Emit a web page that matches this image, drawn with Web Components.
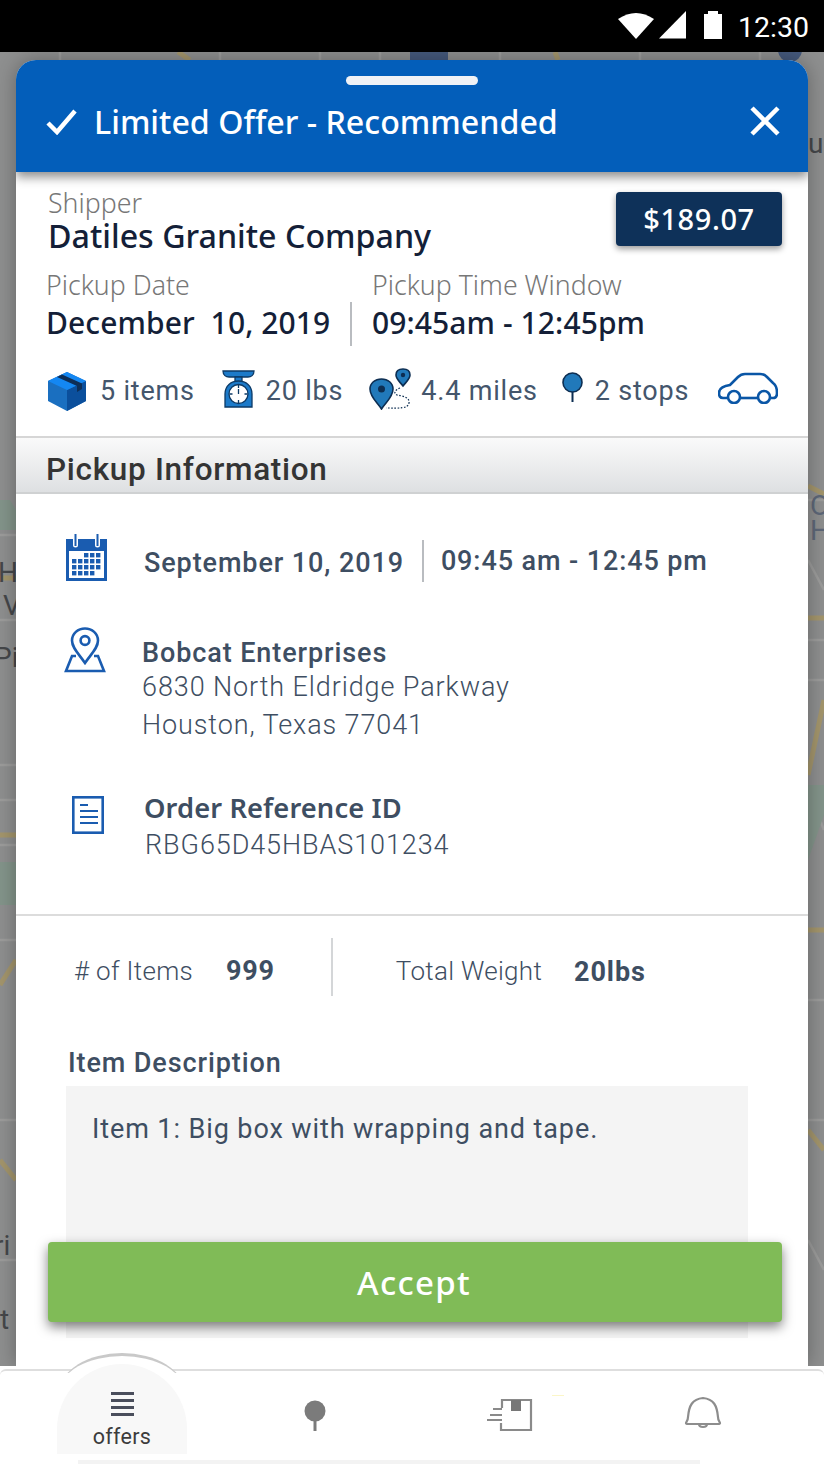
<!DOCTYPE html>
<html>
<head>
<meta charset="utf-8">
<title>Limited Offer</title>
<style>
  html, body { margin: 0; padding: 0; }
  body { width: 824px; height: 1464px; overflow: hidden; background: #fff; font-family: Roboto, "Liberation Sans", sans-serif; position: relative; }
</style>
</head>
<body>
<map-backdrop></map-backdrop>
<status-bar></status-bar>
<offer-sheet>
  <sheet-header>Limited Offer - Recommended</sheet-header>
  <shipper-summary></shipper-summary>
  <section-head>Pickup Information</section-head>
  <pickup-info></pickup-info>
  <item-details></item-details>
</offer-sheet>
<accept-button>Accept</accept-button>
<bottom-nav></bottom-nav>

<script>
// map behind the sheet, only the edges show
class MapBackdrop extends HTMLElement {
    constructor() {
        super();
        this.attachShadow({ mode: 'open' });
        this.shadowRoot.innerHTML = `
            <style>
                :host { position: absolute; left: 0; top: 52px; width: 824px; height: 1314px; overflow: hidden; background: #8e8f8f; display: block; }
                svg { position: absolute; left: 0; top: 0; }
                span { position: absolute; font: 28px/24px Roboto, sans-serif; color: #45474a; }
            </style>
            <svg width="824" height="1314" viewBox="0 52 824 1314" fill="none">
                <g stroke="#9c9c9b" stroke-width="2.500">
                    <path d="M0 535H16M0 620H16M0 765H16M0 800H16M0 845H16M0 940H16M0 1120H16M0 1260H16"/>
                    <path d="M808 500H824M808 560L824 590M808 640H824M808 680H824M808 790L824 830M808 1000H824M808 1120H824M808 1240L824 1270"/>
                    <path d="M60 52V60M220 52V60M320 52V60M380 52V60M500 52V60M640 52V60M760 52V60"/>
                </g>
                <g stroke="#a3956c" stroke-width="5">
                    <path d="M0 578H16M0 835H16M0 985L16 960M0 1160L16 1180"/>
                    <path d="M808 618H824M808 775L824 700M808 930H824M808 1130L824 1150M808 486L824 494"/>
                    <path d="M178 52L190 60M555 52L558 60"/>
                </g>
                <path d="M0 500H10L16 510V530H0ZM0 862H16V905H0Z" fill="#83948a"/>
                <path d="M808 785L824 785V815L808 860Z" fill="#83948a"/>
                <rect x="410" y="52" width="38" height="8" fill="#45597c"/>
                <circle cx="790" cy="50" r="12" fill="#45597c"/>
            </svg>
            <span style="left:-2px;top:509px">H</span>
            <span style="left:3px;top:542px">V</span>
            <span style="left:-6px;top:594px">Pi</span>
            <span style="left:-6px;top:1182px">ri</span>
            <span style="left:0;top:1256px">t</span>
            <span style="left:808px;top:80px;">u</span>
            <span style="left:810px;top:442px;color:#5d6778">O</span>
            <span style="left:810px;top:467px;color:#5d6778">H</span>
        `;
    }
}
customElements.define('map-backdrop', MapBackdrop);

class StatusBar extends HTMLElement {
    constructor() {
        super();
        this.attachShadow({ mode: 'open' });
        this.shadowRoot.innerHTML = `
            <style>
                :host { position: relative; display: flex; height: 52px; background: #000; align-items: center; justify-content: flex-end; color: #fff; box-sizing: border-box; padding: 3px 15px 0 0; font: 28.500px Roboto, sans-serif; }
                svg { display: block; }
            </style>
            <svg width="104" height="28" viewBox="0 0 104 28" fill="#fff" style="margin-top:-6px">
                <path d="M0 8Q18 -4 36 8L18 28Z"/>
                <path d="M41 27.500L68 0V27.500Z"/>
                <path d="M86 3h4V0h10v3h4v25H86Z"/>
            </svg>
            <span style="margin-left:16px">12:30</span>
        `;
    }
}
customElements.define('status-bar', StatusBar);

class OfferSheet extends HTMLElement {
    constructor() {
        super();
        this.attachShadow({ mode: 'open' });
        this.shadowRoot.innerHTML = `
            <style>
                :host { position: relative; display: block; margin: 8px 16px 0; width: 792px; height: 1306px; background: #fff; border-radius: 20px 20px 0 0; box-shadow: 0 0 20px rgba(0,0,0,.3); clip-path: inset(-30px -30px 0 -30px); }
                .clip { height: 100%; overflow: hidden; border-radius: 20px 20px 0 0; }
            </style>
            <div class="clip"><slot></slot></div>
        `;
    }
}
customElements.define('offer-sheet', OfferSheet);

class SheetHeader extends HTMLElement {
    constructor() {
        super();
        this.attachShadow({ mode: 'open' });
        this.shadowRoot.innerHTML = `
            <style>
                :host { position: relative; z-index: 2; display: block; height: 112px; background: #035eba; color: #fff; box-shadow: 0 5px 10px rgba(0,0,0,.45); box-sizing: border-box; padding-top: 16px; }
                .grip { width: 132px; height: 9px; border-radius: 5px; background: #f0f2f6; margin: 0 auto; }
                .row { display: flex; align-items: center; margin-top: 15px; padding: 0 27px 0 30px; }
                .title { flex: 1; font: 500 32.200px "Noto Sans", sans-serif; margin-left: 16px; line-height: 44px; }
                svg { display: block; }
            </style>
            <div class="grip"></div>
            <div class="row">
                <svg width="32" height="26" viewBox="0 0 32 26" fill="none" stroke="#fff" stroke-width="4.500"><path d="M2 14L11 23L29 2"/></svg>
                <div class="title"><slot></slot></div>
                <svg width="32" height="32" viewBox="0 0 32 32" fill="none" stroke="#fff" stroke-width="4.500" style="margin-top:-2px"><path d="M3 3L29 29M29 3L3 29"/></svg>
            </div>
        `;
    }
}
customElements.define('sheet-header', SheetHeader);

class StatItem extends HTMLElement {
    constructor() {
        super();
        this.attachShadow({ mode: 'open' });
        this.shadowRoot.innerHTML = `
            <style>
                :host { display: flex; align-items: center; gap: var(--gap, 13px); font: 27px Roboto, sans-serif; letter-spacing: .8px; color: #44566c; white-space: nowrap; }
            </style>
            <slot name="icon"></slot><slot></slot>
        `;
    }
}
customElements.define('stat-item', StatItem);

class ShipperSummary extends HTMLElement {
    constructor() {
        super();
        this.attachShadow({ mode: 'open' });
        this.shadowRoot.innerHTML = `
            <style>
                :host { display: block; height: 264px; box-sizing: border-box; position: relative; font-family: "Noto Sans", sans-serif; }
                .top { display: flex; justify-content: space-between; align-items: flex-start; padding: 15px 26px 0 32px; height: 89px; box-sizing: border-box; }
                .label { font-size: 26.700px; font-weight: 300; line-height: 32px; color: #777; white-space: nowrap; }
                .shipper { font-size: 32.200px; font-weight: 500; line-height: 34px; color: #141f38; }
                .price { margin-top: 5px; width: 166px; height: 54px; background: #0e3159; color: #fff; border-radius: 4px; font-size: 29px; font-weight: 500; line-height: 54px; text-align: center; box-shadow: 0 3px 6px rgba(0,0,0,.4); letter-spacing: .6px; }
                .dates { display: flex; padding-left: 30px; height: 87px; padding-top: 8px; box-sizing: border-box; }
                .date { width: 304px; }
                .window { border-left: 2px solid #b9bcc0; height: 44px; margin-top: 33px; padding-left: 20px; }
                .window > div { margin-top: -33px; }
                .value { font-size: 30px; font-weight: 500; line-height: 42px; color: #141f38; white-space: pre; margin-top: 1px; letter-spacing: .1px; }
                .stats { display: flex; align-items: center; padding-left: 31px; height: 62px; margin-top: 12px; }
                svg { display: block; }
            </style>
            <div class="top">
                <div>
                    <div class="label">Shipper</div>
                    <div class="shipper">Datiles Granite Company</div>
                </div>
                <div class="price">$189.07</div>
            </div>
            <div class="dates">
                <div class="date">
                    <div class="label">Pickup Date</div>
                    <div class="value">December  10, 2019</div>
                </div>
                <div class="window"><div>
                    <div class="label">Pickup Time Window</div>
                    <div class="value">09:45am - 12:45pm</div>
                </div></div>
            </div>
            <div class="stats">
                <stat-item style="--gap:13px">
                    <svg slot="icon" width="40" height="40" viewBox="0 0 40 40">
                        <path d="M20 1L39 10V30L20 40L1 30V10Z" fill="#1a6fc0"/>
                        <path d="M20 19L39 10V30L20 40Z" fill="#0b4f9c"/>
                        <path d="M1 10L20 1L39 10L20 19Z" fill="#1487f2"/>
                        <path d="M10 6L30 15V21L35 18V12.500L15 3.500Z" fill="#0d2e57"/>
                    </svg>
                    5 items
                </stat-item>
                <stat-item style="--gap:11px;margin-left:27px">
                    <svg slot="icon" width="33" height="38" viewBox="0 0 33 38" style="margin-top:-4px">
                        <path d="M1 1H32C32 5 29 7 26 7H7C4 7 1 5 1 1Z" fill="#1c7ac9" stroke="#0d3a66" stroke-width="1.300"/>
                        <path d="M13 7H20V12H13Z" fill="#1c7ac9" stroke="#0d3a66" stroke-width="1.300"/>
                        <path d="M3 37V24C3 16 9 11 16.500 11C24 11 30 16 30 24V37Z" fill="#1c7ac9" stroke="#0d3a66" stroke-width="1.300"/>
                        <circle cx="16.500" cy="24" r="9.500" fill="#fff" stroke="#0d3a66" stroke-width="1.300"/>
                        <path d="M16.500 15v3M16.500 30v3M7.500 24h3M22.500 24h3M16.500 24V19" stroke="#0d3a66" stroke-width="1.300"/>
                    </svg>
                    20 lbs
                </stat-item>
                <stat-item style="--gap:9px;margin-left:26px">
                    <svg slot="icon" width="43" height="42" viewBox="0 0 43 42" style="margin-top:-4px">
                        <path d="M12.500 41C8 34 1 29 1 21C1 15 6 11 12.500 11C19 11 24 15 24 21C24 29 17 34 12.500 41Z" fill="#2179ba" stroke="#0d2e52" stroke-width="1.600"/>
                        <circle cx="12.500" cy="21" r="3.500" fill="#0d2e52"/>
                        <path d="M34 18C31 14 27 11 27 7C27 3 30 1 34 1C38 1 41 3 41 7C41 11 37 14 34 18Z" fill="#2179ba" stroke="#0d2e52" stroke-width="1.600"/>
                        <circle cx="34" cy="7" r="2.200" fill="#0d2e52"/>
                        <path d="M31 20C26 22 24 25 28 27C33 28 41 29 40 35C39 41 30 40 17 40" fill="none" stroke="#0d2e52" stroke-width="1.200" stroke-dasharray="1.600 1.600"/>
                    </svg>
                    4.4 miles
                </stat-item>
                <stat-item style="--gap:12px;margin-left:24px">
                    <svg slot="icon" width="21" height="30" viewBox="0 0 21 30" style="margin-top:-8px">
                        <path d="M10.500 18V30" stroke="#0d2e52" stroke-width="2"/>
                        <circle cx="10.500" cy="10.500" r="9.500" fill="#2179ba" stroke="#0d2e52" stroke-width="1.600"/>
                    </svg>
                    2 stops
                </stat-item>
                <svg style="margin-left:29px;margin-top:-6px" width="60" height="32" viewBox="0 0 60 32" fill="none" stroke="#0a56a6" stroke-width="2.600">
                    <path d="M9 26H5C2 26 1 24 1 21C1 16 5 14 12 13L20 5C22 3 24 2 27 2H42C45 2 47 3 49 5L55 11C58 13 59 16 59 21C59 24 58 26 55 26H53"/>
                    <path d="M23 26H39"/>
                    <circle cx="16" cy="25" r="6"/>
                    <circle cx="46" cy="25" r="6"/>
                </svg>
            </div>
        `;
    }
}
customElements.define('shipper-summary', ShipperSummary);

class SectionHead extends HTMLElement {
    constructor() {
        super();
        this.attachShadow({ mode: 'open' });
        this.shadowRoot.innerHTML = `
            <style>
                :host { display: block; height: 58px; box-sizing: border-box; border-top: 2px solid #d6d6d6; border-bottom: 2px solid #cfd1d2; background: linear-gradient(#fafafa, #dee0e2); padding-left: 30px; font: 500 31.500px/64px Roboto, sans-serif; color: #343434; letter-spacing: .7px; }
            </style>
            <slot></slot>
        `;
    }
}
customElements.define('section-head', SectionHead);

class InfoRow extends HTMLElement {
    constructor() {
        super();
        this.attachShadow({ mode: 'open' });
        this.shadowRoot.innerHTML = `
            <style>
                :host { display: flex; font: 27px Roboto, sans-serif; letter-spacing: .9px; color: #3e4e62; }
                .icon { width: var(--icon-w, 78px); flex: none; }
            </style>
            <div class="icon"><slot name="icon"></slot></div>
            <div><slot></slot></div>
        `;
    }
}
customElements.define('info-row', InfoRow);

class PickupInfo extends HTMLElement {
    constructor() {
        super();
        this.attachShadow({ mode: 'open' });
        this.shadowRoot.innerHTML = `
            <style>
                :host { display: block; height: 422px; box-sizing: border-box; border-bottom: 2px solid #dcdcdc; padding-top: 45px; }
                svg { display: block; }
                .when { display: flex; align-items: center; height: 44px; font-weight: 500; color: #3e4e62; white-space: nowrap; }
                .when i { display: block; width: 2px; height: 42px; background: #b9bcc0; margin: 0 17px 0 18px; }
                .addr { margin-top: 52px; }
                .addr b { display: block; font-weight: 500; line-height: 36px; margin-bottom: -3px; }
                .light { display: block; font-weight: 300; line-height: 38px; letter-spacing: .9px; }
                .ref { margin-top: 46px; }
                .ref b { display: block; font: 600 27.300px/36px "Noto Sans", sans-serif; letter-spacing: .1px; margin-left: -1px; }
                .code { font-weight: 300; line-height: 36px; letter-spacing: .9px; margin-top: 1px; }
            </style>
            <info-row style="--icon-w:78px;padding-left:50px">
                <svg slot="icon" width="41" height="48" viewBox="0 0 41 48" style="margin-top:-6px">
                    <rect x="0" y="6" width="41" height="42" fill="#1a5cb0"/>
                    <rect x="3" y="18" width="35" height="27" fill="#fff"/>
                    <path d="M9.500 12V4M31.500 12V4" fill="none" stroke="#fff" stroke-width="5" stroke-linecap="round"/>
                    <path d="M9.500 13V1M31.500 13V1" fill="none" stroke="#1a5cb0" stroke-width="2"/>
                    <g fill="#1a5cb0" transform="translate(0,1)">
                        <rect x="18" y="19" width="4.400" height="4.400"/><rect x="24" y="19" width="4.400" height="4.400"/><rect x="30" y="19" width="4.400" height="4.400"/>
                        <rect x="6" y="25" width="4.400" height="4.400"/><rect x="12" y="25" width="4.400" height="4.400"/><rect x="18" y="25" width="4.400" height="4.400"/><rect x="24" y="25" width="4.400" height="4.400"/><rect x="30" y="25" width="4.400" height="4.400"/>
                        <rect x="6" y="31" width="4.400" height="4.400"/><rect x="12" y="31" width="4.400" height="4.400"/><rect x="18" y="31" width="4.400" height="4.400"/><rect x="24" y="31" width="4.400" height="4.400"/><rect x="30" y="31" width="4.400" height="4.400"/>
                        <rect x="6" y="37" width="4.400" height="4.400"/><rect x="12" y="37" width="4.400" height="4.400"/><rect x="18" y="37" width="4.400" height="4.400"/><rect x="24" y="37" width="4.400" height="4.400"/>
                    </g>
                </svg>
                <div class="when"><span style="margin-top:3px">September 10, 2019</span><i></i><span>09:45 am - 12:45 pm</span></div>
            </info-row>
            <info-row class="addr" style="--icon-w:78px;padding-left:48px">
                <svg slot="icon" width="42" height="46" viewBox="0 0 42 46" fill="none" stroke="#1a5cb0" stroke-width="2.600" style="margin-top:-8px">
                    <path d="M21 36C15 27 8 21 8 13.500C8 6.500 14 1.500 21 1.500C28 1.500 34 6.500 34 13.500C34 21 27 27 21 36Z"/>
                    <circle cx="21" cy="13.500" r="4.400"/>
                    <path d="M12 29H8L2 44H40L34 29H30"/>
                </svg>
                <b>Bobcat Enterprises</b>
                <span class="light">6830 North Eldridge Parkway<br>Houston, Texas 77041</span>
            </info-row>
            <info-row class="ref" style="--icon-w:73px;padding-left:56px">
                <svg slot="icon" width="32" height="38" viewBox="0 0 32 38" fill="none" stroke="#1a5cb0" stroke-width="2.600" style="margin-top:6px">
                    <rect x="1.300" y="1.300" width="29.400" height="35.400"/>
                    <path d="M8 9H16M8 15H26M8 21H26M8 27H26" stroke-width="2"/>
                </svg>
                <b>Order Reference ID</b>
                <div class="code">RBG65D45HBAS101234</div>
            </info-row>
        `;
    }
}
customElements.define('pickup-info', PickupInfo);

class ItemDetails extends HTMLElement {
    constructor() {
        super();
        this.attachShadow({ mode: 'open' });
        this.shadowRoot.innerHTML = `
            <style>
                :host { display: block; padding: 21px 0 0 50px; font: 27px Roboto, sans-serif; color: #3e4e62; }
                .counts { display: flex; align-items: center; height: 60px; white-space: nowrap; }
                .counts span { font-size: 26px; font-weight: 300; letter-spacing: .3px; margin-top: 7px; }
                .counts b { font-weight: 700; letter-spacing: .8px; margin-top: 7px; }
                .counts i { display: block; width: 2px; height: 58px; background: #d4d6d8; margin: 0 63px 0 56px; }
                h4 { margin: 48px 0 5px 2px; font: 500 27px/36px Roboto, sans-serif; letter-spacing: .9px; }
                .box { width: 682px; height: 252px; background: #f4f4f4; box-sizing: border-box; padding: 24px 26px; letter-spacing: .9px; line-height: 38px; }
            </style>
            <div class="counts">
                <span style="margin-left:8px">#&nbsp;of Items</span>
                <b style="margin-left:33px">999</b>
                <i></i>
                <span>Total Weight</span>
                <b style="margin-left:32px;margin-top:10px;letter-spacing:.9px">20lbs</b>
            </div>
            <h4>Item Description</h4>
            <div class="box">Item 1: Big box with wrapping and tape.</div>
        `;
    }
}
customElements.define('item-details', ItemDetails);

// floats over the sheet
class AcceptButton extends HTMLElement {
    constructor() {
        super();
        this.attachShadow({ mode: 'open' });
        this.shadowRoot.innerHTML = `
            <style>
                :host { position: absolute; left: 48px; top: 1242px; width: 734px; height: 80px; background: #80bb57; color: #fff; border-radius: 4px; box-shadow: 0 5px 12px rgba(0,0,0,.5); display: flex; align-items: center; justify-content: center; font: 500 33px "Noto Sans", sans-serif; letter-spacing: 1.300px; padding-right: 2px; box-sizing: border-box; }
            </style>
            <slot></slot>
        `;
    }
}
customElements.define('accept-button', AcceptButton);

class BottomNav extends HTMLElement {
    constructor() {
        super();
        this.attachShadow({ mode: 'open' });
        this.shadowRoot.innerHTML = `
            <style>
                :host { position: absolute; left: 0; top: 1369px; width: 824px; height: 95px; display: grid; grid-template-columns: 244px 145px 247px 120px; background: #fff; border-top: 2px solid #dedede; border-radius: 6px 6px 0 0; box-sizing: border-box; font: 21.500px Roboto, sans-serif; color: #3c3c3c; }
                .bump { position: absolute; left: 60px; top: -18px; width: 124px; height: 40px; box-sizing: border-box; border-top: 3px solid #c9c9c9; border-radius: 62px 62px 0 0 / 38px 38px 0 0; background: #fff; clip-path: inset(0 0 50% 0); }
                .offers { position: absolute; left: 57px; top: -7px; width: 130px; height: 90px; background: #f8f8f8; border-radius: 65px 65px 0 0; display: flex; flex-direction: column; align-items: center; padding-top: 28px; box-sizing: border-box; letter-spacing: .3px; }
                .offers svg { margin-bottom: 7px; }
                .slot { display: flex; justify-content: center; padding-top: 26px; grid-column-start: var(--c); }
                .foot { position: absolute; left: 78px; top: 89px; width: 622px; height: 4px; background: #f3f3f3; }
                .mark { position: absolute; left: 552px; top: 24px; width: 12px; height: 1px; background: #fbf6c8; }
                svg { display: block; }
            </style>
            <div class="bump"></div>
            <div class="offers">
                <svg width="23" height="25" viewBox="0 0 23 25" fill="#4a4e5c"><rect y="0" width="23" height="3"/><rect y="7" width="23" height="3"/><rect y="14" width="23" height="3"/><rect y="21" width="23" height="3"/></svg>
                <span>offers</span>
            </div>
            <div class="slot" style="--c:2">
                <svg width="22" height="32" viewBox="0 0 22 32" style="margin-left:-4px;margin-top:3px"><path d="M11 18V31" stroke="#7b7b7b" stroke-width="3"/><circle cx="11" cy="11" r="10.500" fill="#7b7b7b"/></svg>
            </div>
            <div class="slot" style="--c:3;padding-top:27px">
                <svg width="46" height="34" viewBox="0 0 46 34" fill="none" stroke="#8a8a8a" stroke-width="2.200" style="margin-left:-5px"><path d="M15 10V2H44V32H14V25"/><rect x="24" y="2" width="10" height="11" fill="#777" stroke="none"/><path d="M6 11H15M3 17H15M0 22H15" stroke-width="2"/></svg>
            </div>
            <div class="slot" style="--c:4;padding-top:24px">
                <svg width="38" height="34" viewBox="0 0 38 34" fill="none" stroke="#8d8d8d" stroke-width="2.200" style="margin-left:14px"><path d="M4 22C5 11 8 4 19 3C30 4 33 11 34 22C34 26 36 27 36 28C36 29 35 29 34 29H4C3 29 2 29 2 28C2 27 4 26 4 22Z"/><path d="M15 29C15 33 23 33 23 29"/></svg>
            </div>
            <div class="mark"></div>
            <div class="foot"></div>
        `;
    }
}
customElements.define('bottom-nav', BottomNav);
</script>
</body>
</html>
